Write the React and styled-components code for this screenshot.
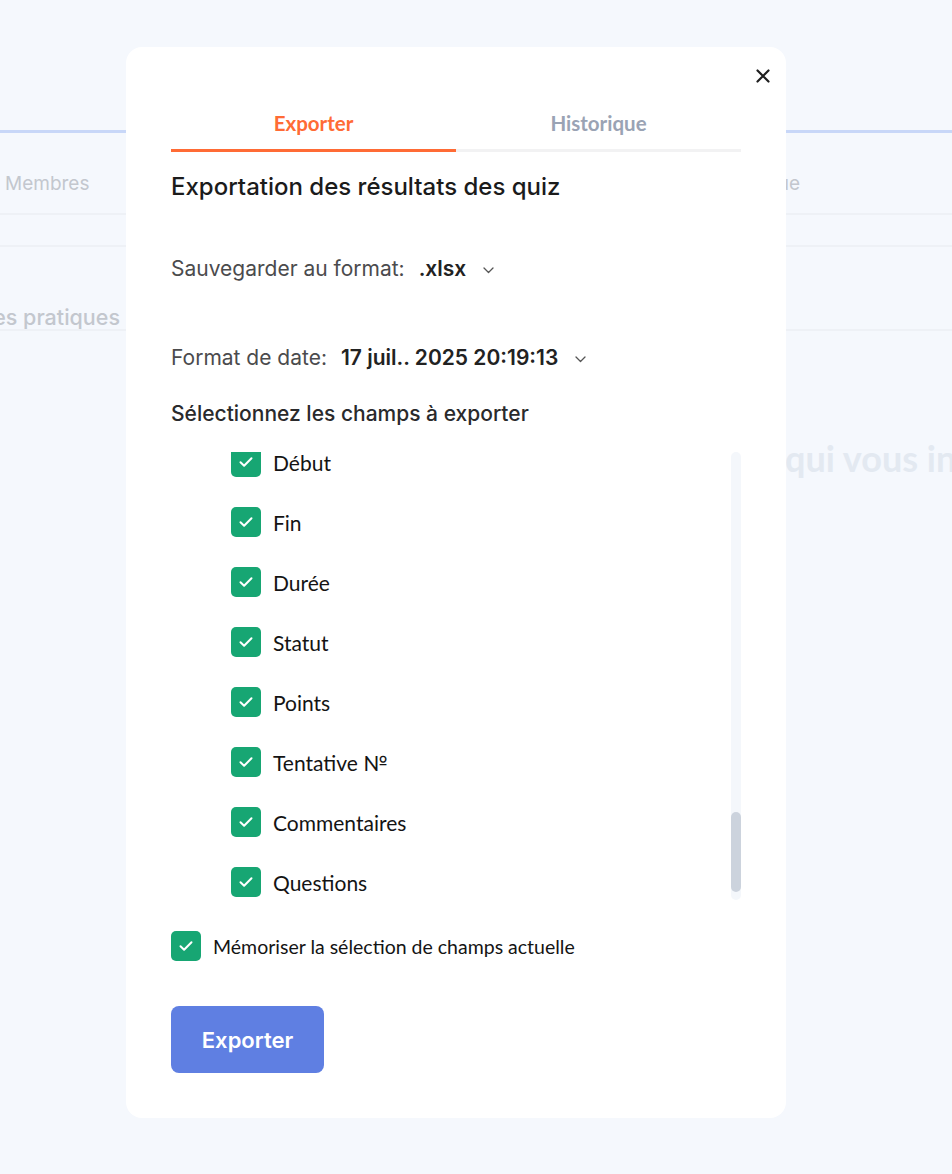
import React, { useEffect, useRef } from 'react';
import styled, { createGlobalStyle } from 'styled-components';

const GlobalStyle = createGlobalStyle`
  html, body {
    margin: 0;
    padding: 0;
  }
  body {
    background: #f5f8fd;
    font-family: Inter, "Noto Sans", sans-serif;
    -webkit-font-smoothing: antialiased;
  }
`;

const Page = styled.div`
  position: relative;
  width: 952px;
  height: 1174px;
  overflow: hidden;
  background: #f5f8fd;
`;

const TopBar = styled.div`
  height: 130px;
  border-bottom: 3px solid #c8d7f8;
`;

const NavRow = styled.div`
  display: flex;
  justify-content: space-between;
  align-items: flex-end;
  height: 63px;
  padding: 0 152px 17px 5px;
  border-bottom: 2px solid #eef1f6;
  font-size: 19px;
  line-height: 24px;
  color: #c3c7ce;
`;

const ThinRow = styled.div`
  height: 30px;
  border-bottom: 2px solid #eef1f6;
`;

const SectionRow = styled.div`
  display: flex;
  align-items: flex-end;
  height: 82px;
  border-bottom: 2px solid #eef1f6;
`;

const Clip = styled.div`
  width: ${p => p.$w}px;
  flex-shrink: 0;
  overflow: hidden;
  white-space: nowrap;
  display: flex;
  justify-content: flex-end;
`;

const SectionTitle = styled.span`
  font-size: 21.5px;
  font-weight: 500;
  color: #c3c7ce;
  line-height: 28px;
  transform: translateY(2px);
`;

const HeroRow = styled.div`
  display: flex;
  margin-top: 105px;
  white-space: pre;
  font-family: Lato, "Open Sans", sans-serif;
  font-size: 36px;
  font-weight: 700;
  color: #e3e9f1;
  line-height: 44px;
`;

const Modal = styled.div`
  position: absolute;
  left: 126px;
  top: 47px;
  width: 660px;
  height: 1071px;
  box-sizing: border-box;
  padding: 50px 45px 45px;
  background: #ffffff;
  border-radius: 16px;
  display: flex;
  flex-direction: column;
`;

const CloseButton = styled.button`
  position: absolute;
  right: 15px;
  top: 21px;
  width: 16px;
  height: 16px;
  padding: 0;
  border: none;
  background: none;
  cursor: pointer;
  display: flex;
  align-items: center;
  justify-content: center;
`;

const Tabs = styled.div`
  display: flex;
`;

const Tab = styled.div`
  flex: 1;
  text-align: center;
  font-family: Lato, "Open Sans", sans-serif;
  font-size: 20.5px;
  font-weight: 700;
  line-height: 24px;
  padding: 14px 0 14px;
  color: ${p => (p.$active ? '#ff6b35' : '#9aa3b4')};
  border-bottom: 3px solid ${p => (p.$active ? '#ff6b35' : '#f2f2f3')};
`;

const Title = styled.h2`
  margin: 20px 0 0;
  font-size: 24px;
  font-weight: 500;
  line-height: 30px;
  color: #1b1b1b;
`;

const SelectRow = styled.div`
  display: flex;
  align-items: center;
  margin-top: ${p => p.$top}px;
  font-size: 21px;
  line-height: 28px;
`;

const SelectLabel = styled.span`
  color: #4b4b4d;
`;

const SelectValue = styled.span`
  margin-left: 14px;
  font-weight: 600;
  color: #222222;
`;

const Chevron = styled.svg`
  margin-left: 17px;
  margin-top: 2px;
`;

const FieldsHeading = styled.div`
  margin-top: 28px;
  font-size: 21px;
  font-weight: 500;
  line-height: 28px;
  color: #2a2a2c;
`;

const ListFrame = styled.div`
  margin-top: 24px;
  height: 448px;
  display: flex;
`;

const FieldList = styled.div`
  flex: 1;
  overflow-y: scroll;
  box-sizing: border-box;
  padding: 0 0 3px 60px;
  display: flex;
  flex-direction: column;
  gap: 30px;
  scrollbar-width: none;

  &::-webkit-scrollbar {
    display: none;
  }
`;

const Track = styled.div`
  width: 10px;
  flex-shrink: 0;
  border-radius: 5px;
  background: #f4f7fb;
  display: flex;
  flex-direction: column;
`;

const Thumb = styled.div`
  margin-top: auto;
  margin-bottom: 8px;
  height: 80px;
  border-radius: 5px;
  background: #ccd3dd;
`;

const CheckRow = styled.label`
  display: flex;
  align-items: center;
  gap: 12px;
  flex-shrink: 0;
  height: 30px;
  font-family: Lato, "Open Sans", sans-serif;
  font-size: ${p => p.$size}px;
  color: #141414;
  cursor: pointer;
`;

const Box = styled.span`
  width: 30px;
  height: 30px;
  flex-shrink: 0;
  border-radius: 5px;
  background: #17a673;
  display: flex;
  align-items: center;
  justify-content: center;
`;

const RememberRow = styled.div`
  margin-top: 31px;
`;

const ExportButton = styled.button`
  margin-top: 45px;
  align-self: flex-start;
  width: 153px;
  height: 67px;
  border: none;
  border-radius: 8px;
  background: #5f7fe2;
  color: #ffffff;
  font-family: Inter, "Noto Sans", sans-serif;
  font-size: 22px;
  font-weight: 600;
  cursor: pointer;
`;

const fields = [
  "Nom", "Prénom", "Nom d'utilisateur", "E-mail", "Téléphone", "Identifiant",
  "Groupe", "Département", "Poste", "Entreprise", "Ville", "Pays", "Langue",
  "Rôle", "Date d'inscription", "Dernière connexion", "Statut du compte",
  "Responsable", "Matricule", "Site", "Équipe", "Cours", "Module", "Quiz",
  "Catégorie", "Auteur", "Version", "Date de publication", "Score minimum",
  "Score maximum", "Score", "Pourcentage", "Note", "Résultat",
  "Nombre de questions", "Réponses correctes", "Réponses incorrectes",
  "Début", "Fin", "Durée", "Statut", "Points", "Tentative №",
  "Commentaires", "Questions",
];

const Check = () => (
  <svg width="16" height="16" viewBox="0 0 16 16" fill="none">
    <path d="M2.5 8.3l3.6 3.5L13.5 4.3" stroke="#fff" strokeWidth="2" strokeLinecap="round" strokeLinejoin="round" />
  </svg>
);

const Checkbox = ({ label, size }) => (
  <CheckRow $size={size}>
    <Box><Check /></Box>
    {label}
  </CheckRow>
);

const ChevronDown = () => (
  <Chevron width="11" height="7" viewBox="0 0 11 7" fill="none">
    <path d="M1 1l4.5 4.5L10 1" stroke="#555" strokeWidth="1.3" strokeLinecap="round" strokeLinejoin="round" />
  </Chevron>
);

export default function App() {
  const listRef = useRef(null);

  useEffect(() => {
    if (listRef.current) listRef.current.scrollTop = listRef.current.scrollHeight;
  }, []);

  return (
    <Page>
      <GlobalStyle />
      <TopBar />
      <NavRow>
        <span>Membres</span>
        <span>Statistique</span>
      </NavRow>
      <ThinRow />
      <SectionRow>
        <Clip $w={120}><SectionTitle>Bonnes pratiques</SectionTitle></Clip>
      </SectionRow>
      <HeroRow>
        <Clip $w={785}>Trouvez la formation </Clip>
        <span>qui vous intéresse</span>
      </HeroRow>

      <Modal>
        <CloseButton aria-label="Fermer">
          <svg width="14" height="14" viewBox="0 0 14 14">
            <path d="M1.5 1.5l11 11M12.5 1.5l-11 11" stroke="#1f1f1f" strokeWidth="2.2" strokeLinecap="round" />
          </svg>
        </CloseButton>
        <Tabs>
          <Tab $active>Exporter</Tab>
          <Tab>Historique</Tab>
        </Tabs>
        <Title>Exportation des résultats des quiz</Title>
        <SelectRow $top={53}>
          <SelectLabel>Sauvegarder au format:</SelectLabel>
          <SelectValue>.xlsx</SelectValue>
          <ChevronDown />
        </SelectRow>
        <SelectRow $top={61}>
          <SelectLabel>Format de date:</SelectLabel>
          <SelectValue>17 juil.. 2025 20:19:13</SelectValue>
          <ChevronDown />
        </SelectRow>
        <FieldsHeading>Sélectionnez les champs à exporter</FieldsHeading>
        <ListFrame>
          <FieldList ref={listRef}>
            {fields.map(f => <Checkbox key={f} label={f} size={21} />)}
          </FieldList>
          <Track><Thumb /></Track>
        </ListFrame>
        <RememberRow>
          <Checkbox label="Mémoriser la sélection de champs actuelle" size={19.5} />
        </RememberRow>
        <ExportButton>Exporter</ExportButton>
      </Modal>
    </Page>
  );
}
